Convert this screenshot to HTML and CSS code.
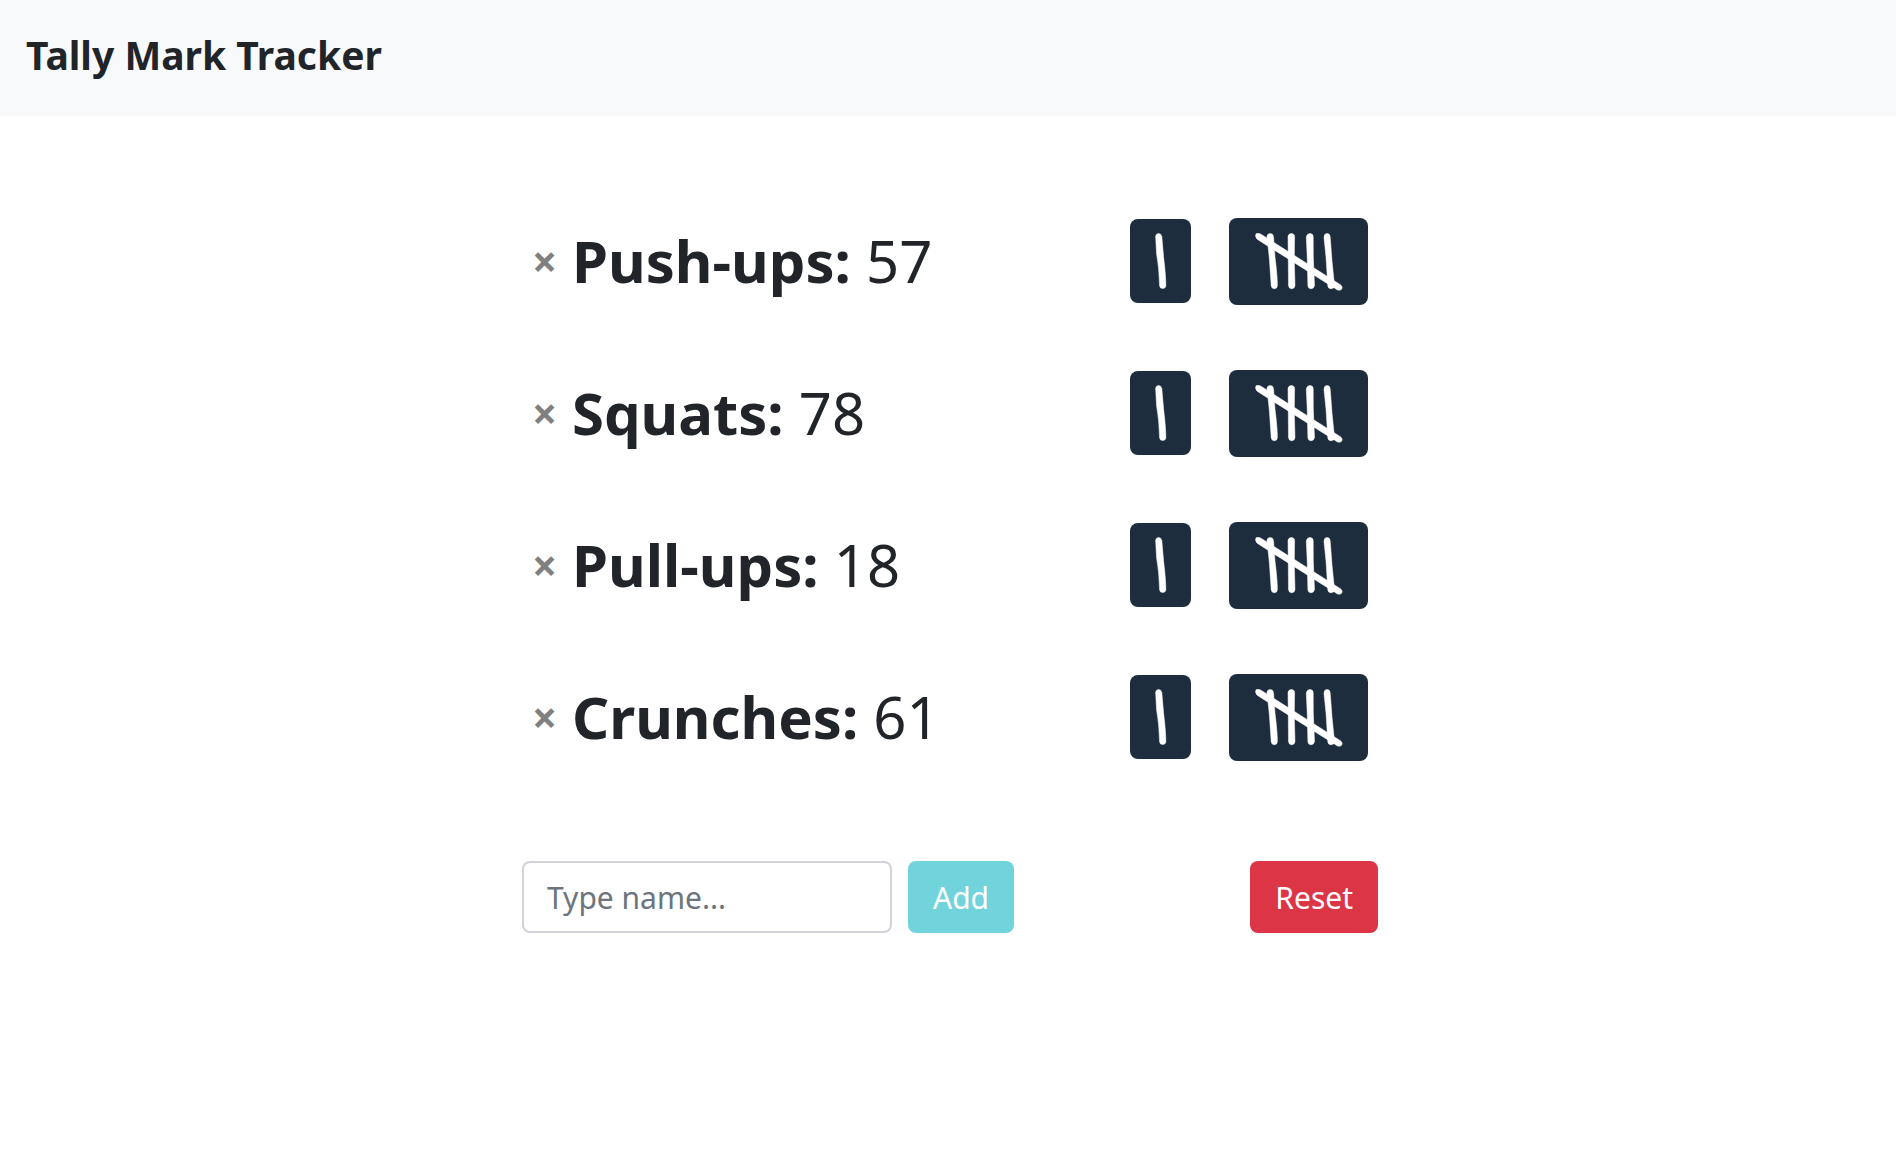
FILE: index.html
```html
<!DOCTYPE html>
<html lang="en">
<head>
  <meta charset="utf-8">
  <meta name="viewport" content="width=device-width, initial-scale=1">
  <title>Tally Mark Tracker</title>
  <link rel="stylesheet" href="styles.css">
</head>
<body>
  <svg class="sprite" aria-hidden="true">
    <symbol id="tally-one" viewBox="0 0 25 56">
      <path d="M7.6 3.2Q8 .6 10.7.6Q13.4.8 13.8 3.4L15.6 24Q17.8 42 17.9 53Q17.4 55.600 14.7 55.600Q12 55.600 11.6 53Q11 34 8.6 21Z"/>
    </symbol>
    <symbol id="tally-five" viewBox="0 0 88 58">
      <path d="M1 .8Q3 -.3 5.5.9L85.500 51.800Q88 53.800 86.800 56Q85.200 58 82.500 57L2.500 6.500Q-.5 3.500 1 .8Z"/>
      <path d="M12 3.500Q12.300.5 15.200.5Q18.200.6 18.500 3.500L20 24Q22.400 43 22.400 52.500Q22 55.800 19.400 55.800Q16.600 55.800 16.200 52.800L14.300 25Z"/>
      <path d="M33 3.500Q33.500.5 36.400.5Q39.500.6 39.600 3.500L39.300 28L40 52.500Q39.500 55.800 36.800 55.800Q34 55.800 33.500 52.800L33.300 28Z"/>
      <path d="M51.300 4Q52 .5 55 .5Q58 .6 58.200 3.500L58.300 24L59.500 52.500Q58.800 55.800 56 55.800Q53.300 55.800 52.900 52.800L52.200 24Z"/>
      <path d="M69 4.500Q69 .5 72 .5Q74.800.6 75.200 3.500L77 28L79.500 52.500Q79 55.800 76 55.800Q73 55.800 72.800 52.800L71 24Z"/>
    </symbol>
  </svg>

  <header class="navbar">
    <h1 class="brand">Tally Mark Tracker</h1>
  </header>

  <main class="tracker">
    <ul class="tally-list">
      <li class="tally">
        <button class="remove" type="button" aria-label="Remove Push-ups">×</button>
        <h2 class="tally-label"><strong>Push-ups:</strong> 57</h2>
        <button class="mark mark-one" type="button" aria-label="Add 1 to Push-ups"><svg width="25" height="56"><use href="#tally-one"/></svg></button>
        <button class="mark mark-five" type="button" aria-label="Add 5 to Push-ups"><svg width="88" height="58"><use href="#tally-five"/></svg></button>
      </li>
      <li class="tally">
        <button class="remove" type="button" aria-label="Remove Squats">×</button>
        <h2 class="tally-label"><strong>Squats:</strong> 78</h2>
        <button class="mark mark-one" type="button" aria-label="Add 1 to Squats"><svg width="25" height="56"><use href="#tally-one"/></svg></button>
        <button class="mark mark-five" type="button" aria-label="Add 5 to Squats"><svg width="88" height="58"><use href="#tally-five"/></svg></button>
      </li>
      <li class="tally">
        <button class="remove" type="button" aria-label="Remove Pull-ups">×</button>
        <h2 class="tally-label"><strong>Pull-ups:</strong> 18</h2>
        <button class="mark mark-one" type="button" aria-label="Add 1 to Pull-ups"><svg width="25" height="56"><use href="#tally-one"/></svg></button>
        <button class="mark mark-five" type="button" aria-label="Add 5 to Pull-ups"><svg width="88" height="58"><use href="#tally-five"/></svg></button>
      </li>
      <li class="tally">
        <button class="remove" type="button" aria-label="Remove Crunches">×</button>
        <h2 class="tally-label"><strong>Crunches:</strong> 61</h2>
        <button class="mark mark-one" type="button" aria-label="Add 1 to Crunches"><svg width="25" height="56"><use href="#tally-one"/></svg></button>
        <button class="mark mark-five" type="button" aria-label="Add 5 to Crunches"><svg width="88" height="58"><use href="#tally-five"/></svg></button>
      </li>
    </ul>

    <form class="controls">
      <input class="name-input" type="text" placeholder="Type name..." aria-label="Name">
      <button class="btn btn-add" type="submit">Add</button>
      <button class="btn btn-reset" type="reset">Reset</button>
    </form>
  </main>
</body>
</html>
```
FILE: styles.css
```css
* {
  box-sizing: border-box;
}

body {
  margin: 0;
  background: #fff;
  color: #212529;
  font-family: "Noto Sans", "Open Sans", sans-serif;
}

button,
input {
  font: inherit;
}

button {
  border: 0;
  cursor: pointer;
}

.sprite {
  display: none;
}

.navbar {
  padding: 27px 26px 33px;
  background: #f8f9fb;
}

.brand {
  margin: 0;
  font-size: 39px;
  font-weight: 700;
  line-height: 56px;
}

.tracker {
  max-width: 860px;
  margin: 0 auto;
  padding: 69px 0 68px 4px;
}

.tally-list {
  margin: 0 0 68px;
  padding: 0;
  list-style: none;
}

.tally {
  display: flex;
  align-items: center;
  min-height: 152px;
  padding: 0 10px;
}

.remove {
  width: 40px;
  padding: 0;
  background: none;
  color: #808080;
  font-size: 44px;
  font-weight: 700;
  line-height: 56px;
  text-align: left;
}

.tally-label {
  flex: 1;
  margin: 0;
  font-size: 58px;
  font-weight: 400;
  line-height: 72px;
}

.tally-label strong {
  font-weight: 700;
}

.mark {
  display: block;
  border-radius: 8px;
  background: #1e2d3d;
  fill: #fff;
  stroke: #fff;
  stroke-width: 0.5;
}

.mark svg {
  display: block;
}

.mark-one {
  margin-right: 38px;
  padding: 14px 18px;
}

.mark-five {
  padding: 15px 25px 14px 26px;
}

.controls {
  display: flex;
  gap: 16px;
}

.name-input {
  width: 370px;
  min-width: 0;
  height: 72px;
  padding: 0 23px;
  border: 2px solid #d0d4da;
  border-radius: 8px;
  color: #495057;
  font-size: 30px;
}

.name-input::placeholder {
  color: #6c757d;
  opacity: 1;
}

.btn {
  height: 72px;
  padding: 0 25px;
  border-radius: 8px;
  color: #fff;
  font-size: 30px;
}

.btn-add {
  background: #71d3db;
}

.btn-reset {
  margin-left: auto;
  background: #dc3545;
}
```
